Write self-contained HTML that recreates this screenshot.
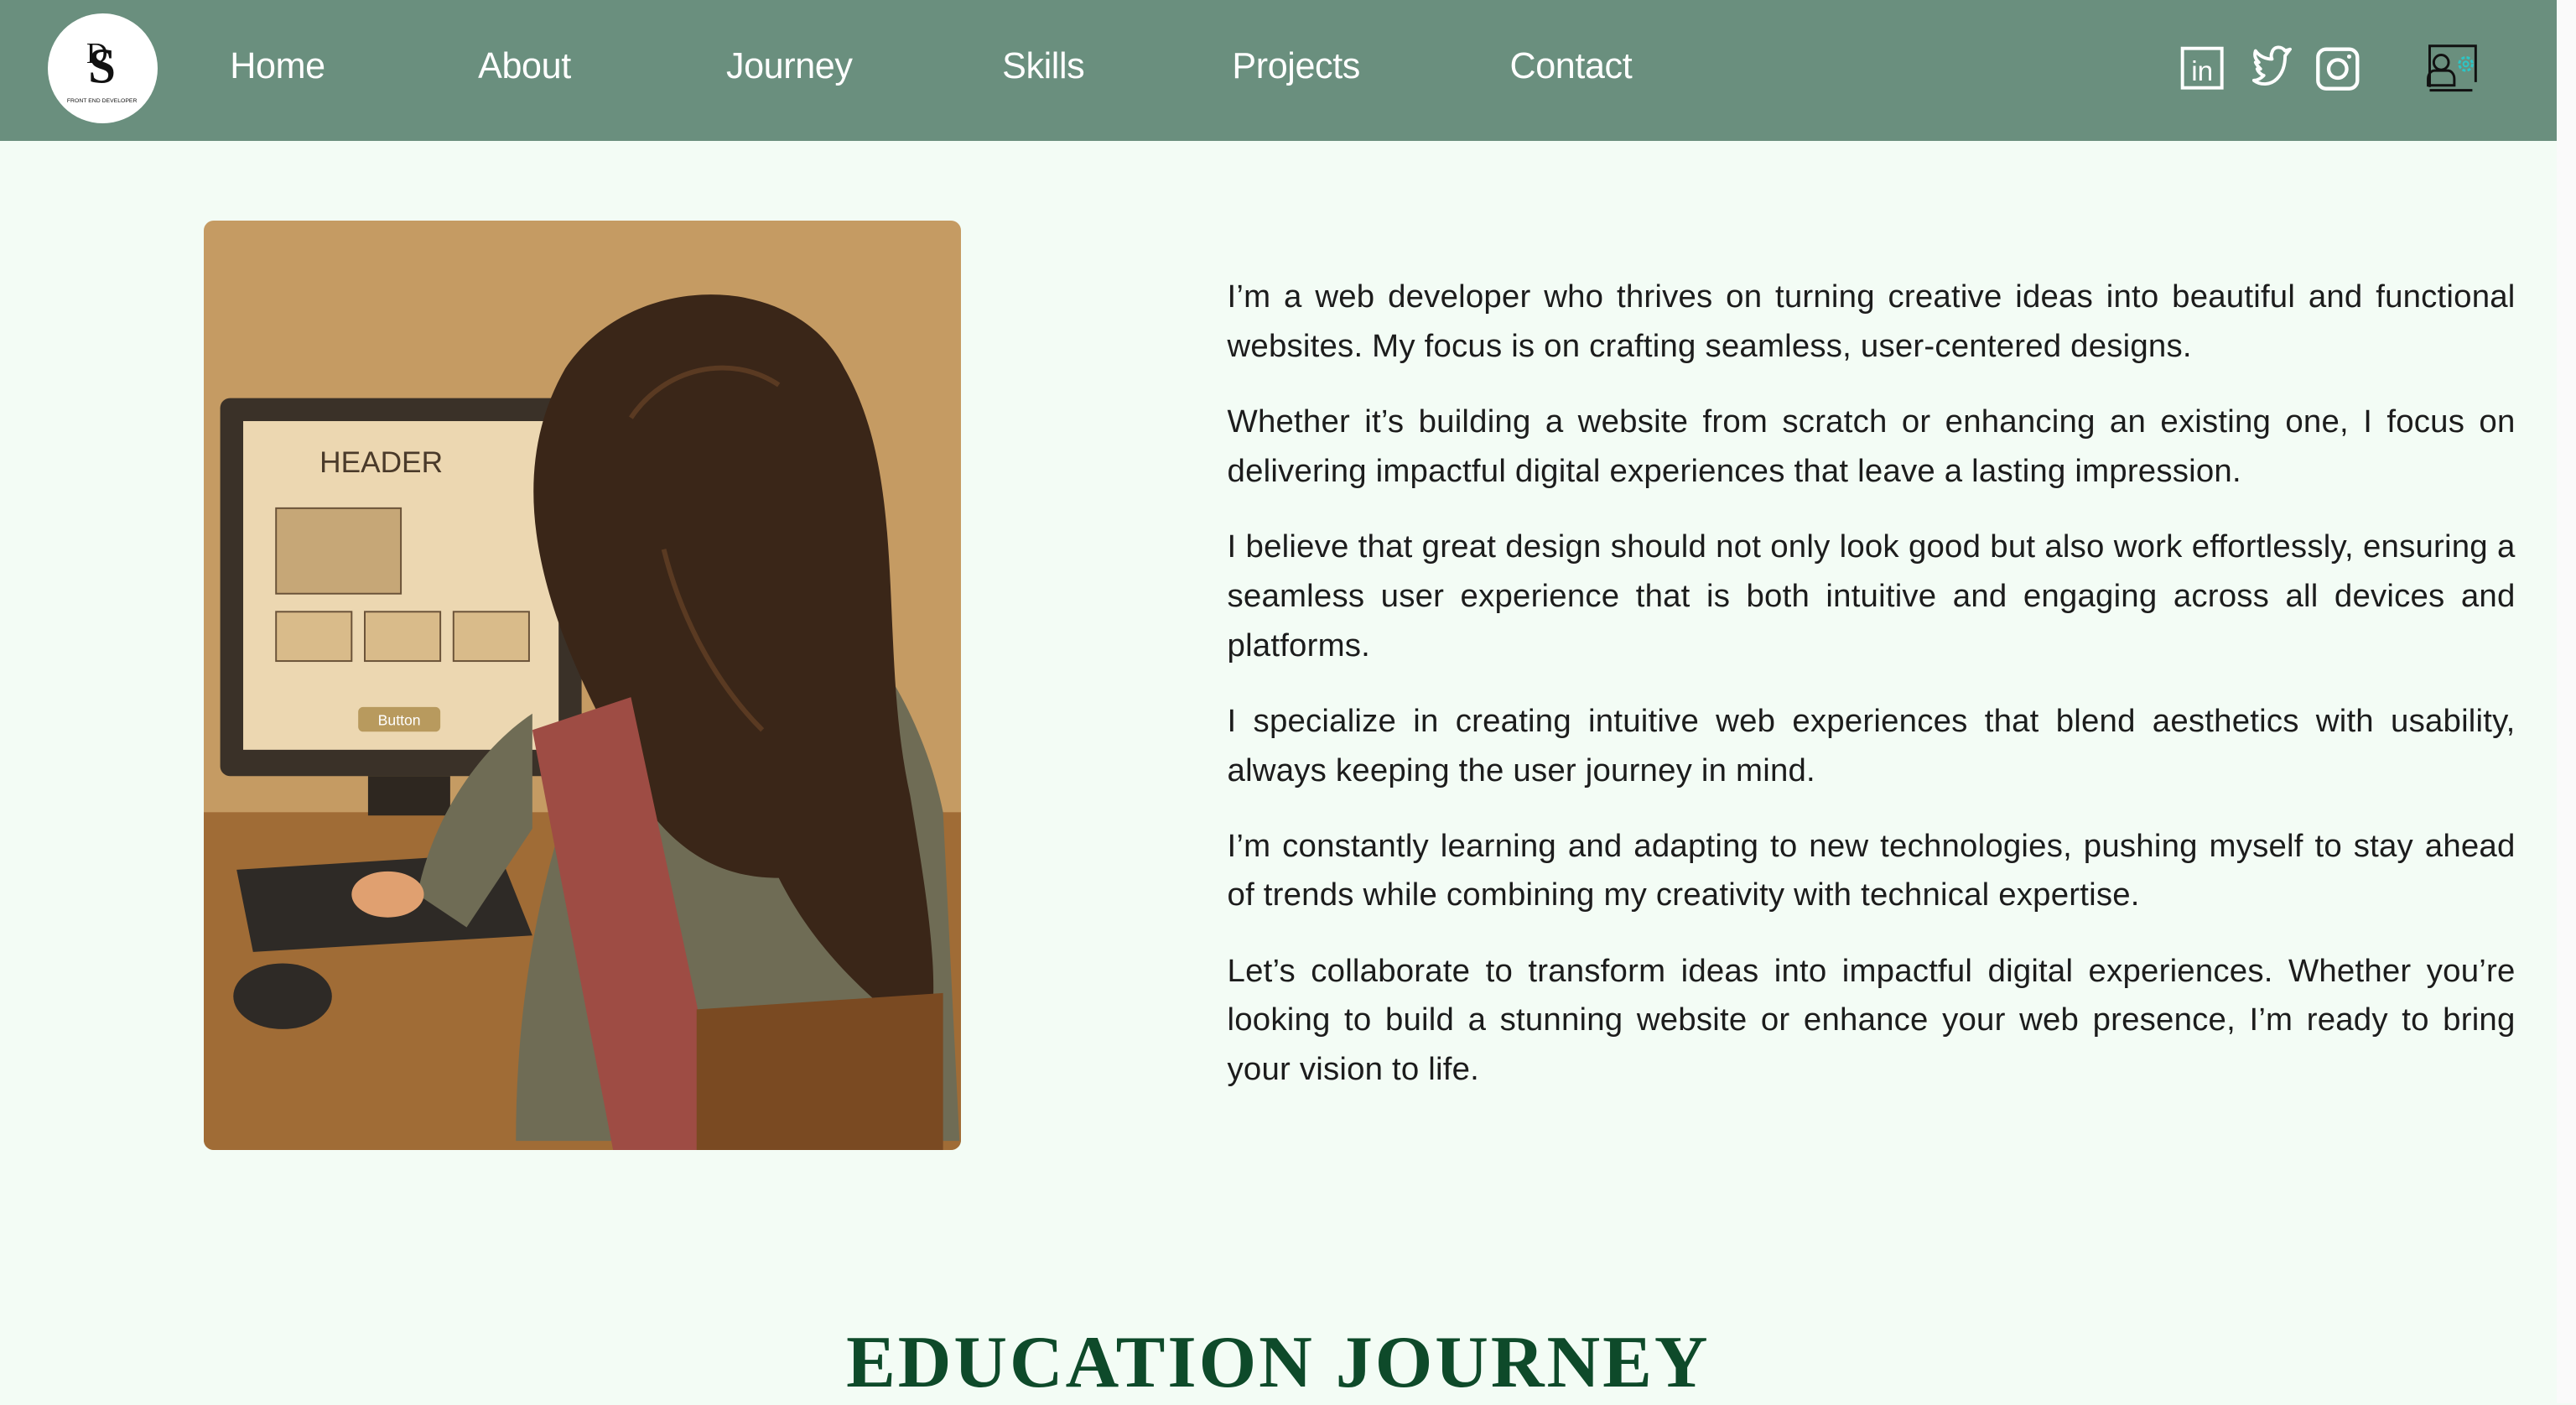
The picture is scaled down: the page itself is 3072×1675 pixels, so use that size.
<!DOCTYPE html>
<html><head><meta charset="utf-8"><style>
html,body{margin:0;padding:0;}
body{width:1568px;height:854px;zoom:1.9592;background:#f3fcf5;overflow:hidden;position:relative;font-family:"Liberation Sans",sans-serif;}
.hdr{position:absolute;left:0;top:0;width:1556px;height:86px;background:#6a8f7e;}
.logo{position:absolute;left:29px;top:8px;width:67px;height:67px;border-radius:50%;background:#fff;}
.nav a{position:absolute;top:28px;color:#fff;font-size:22px;text-decoration:none;letter-spacing:-0.2px;}
.sb{position:absolute;left:1556px;top:0;width:12px;height:854px;background:#fafafa;}
.thumb{position:absolute;left:1560px;top:115px;width:6px;height:125px;background:#b0b0b0;border-radius:3px;}
.img{position:absolute;left:124px;top:134px;width:461px;height:566px;border-radius:6px;overflow:hidden;}
.txt{position:absolute;left:747px;top:166px;width:784px;color:#1c1c1c;font-size:19.6px;line-height:30px;text-align:justify;letter-spacing:0.1px;}
.txt p{margin:0 0 16px 0;}
h2{position:absolute;left:0;width:1556px;top:803px;margin:0;text-align:center;font-family:"Liberation Serif",serif;font-weight:bold;font-size:45px;color:#0e4a2a;letter-spacing:1.5px;}
</style></head><body>
<div class="hdr">
<div class="logo"><svg width="67" height="67" viewBox="0 0 67 67"><text x="33" y="42" font-family="Liberation Serif" font-size="30" font-weight="bold" text-anchor="middle" fill="#111">S</text><text x="30" y="30" font-family="Liberation Serif" font-size="18" text-anchor="middle" fill="#111">D</text><text x="33" y="54" font-size="3.5" text-anchor="middle" fill="#111" font-family="Liberation Sans">FRONT END DEVELOPER</text></svg></div>
<div class="nav">
<a style="left:140px">Home</a><a style="left:291px">About</a><a style="left:442px">Journey</a><a style="left:610px">Skills</a><a style="left:750px">Projects</a><a style="left:919px">Contact</a>
</div>
<svg style="position:absolute;left:1320px;top:22px" width="200" height="40" viewBox="0 0 200 40">
<rect x="8.5" y="7.5" width="24" height="24" fill="none" stroke="#fff" stroke-width="2"/>
<text x="20.5" y="27" font-size="17" fill="#fff" text-anchor="middle" font-family="Liberation Sans">in</text>
<path d="M52 27c4 3 10 3 14-1c4-4 5-9 5-14l3-4l-3 1c-2-3-7-3-8 1c-1 2 0 4 0 4c-4 0-8-2-10-5c-1 3 0 5 2 7l-2 0c1 2 2 3 3 4l-2 0c1 3 4 4 4 4c-2 2-4 3-6 3z" fill="none" stroke="#fff" stroke-width="2" stroke-linejoin="round"/>
<rect x="91" y="8" width="24" height="24" rx="5" fill="none" stroke="#fff" stroke-width="2.2"/>
<circle cx="103" cy="20" r="5.5" fill="none" stroke="#fff" stroke-width="2.2"/>
<circle cx="110" cy="12.5" r="1.3" fill="#fff"/>
<path d="M159 31V6h28v22" fill="none" stroke="#111" stroke-width="1.5"/>
<path d="M159 33h26" stroke="#111" stroke-width="1.5"/>
<circle cx="166" cy="16" r="4.5" fill="none" stroke="#111" stroke-width="1.5"/>
<path d="M158 30v-4c0-3 2-5 4-5h8c2 0 4 2 4 5v4z" fill="none" stroke="#111" stroke-width="1.5"/>
<circle cx="181" cy="17" r="4" fill="none" stroke="#2cc6c6" stroke-width="1.5" stroke-dasharray="2 1.2"/>
<circle cx="181" cy="17" r="1.5" fill="none" stroke="#2cc6c6" stroke-width="1"/>
</svg>
</div>
<div class="sb"><div class="thumb"></div></div>
<div class="img"><svg width="461" height="566" viewBox="0 0 461 566">
<rect width="461" height="566" fill="#c59b63"/>
<rect x="0" y="360" width="461" height="206" fill="#a06c36"/>
<rect x="10" y="108" width="220" height="230" rx="6" fill="#3a3128"/>
<rect x="24" y="122" width="192" height="200" fill="#ecd7b1"/>
<text x="108" y="153" font-size="18" fill="#4a3a2a" text-anchor="middle" font-family="Liberation Sans">HEADER</text>
<rect x="44" y="175" width="76" height="52" fill="#c6a777" stroke="#6a5238"/>
<rect x="44" y="238" width="46" height="30" fill="#d9bb8a" stroke="#6a5238"/>
<rect x="98" y="238" width="46" height="30" fill="#d9bb8a" stroke="#6a5238"/>
<rect x="152" y="238" width="46" height="30" fill="#d9bb8a" stroke="#6a5238"/>
<rect x="94" y="296" width="50" height="15" rx="3" fill="#b89a5e"/>
<text x="119" y="307" font-size="9" fill="#fff" text-anchor="middle" font-family="Liberation Sans">Button</text>
<rect x="100" y="338" width="50" height="24" fill="#2e2720"/>
<path d="M20 395l160 -10 20 50-170 10z" fill="#2e2a26"/>
<ellipse cx="48" cy="472" rx="30" ry="20" fill="#2e2a26"/>
<path d="M190 560c0-140 40-250 80-300c20-30 60-40 100-30c40 20 70 80 80 130l10 200z" fill="#6f6c55"/>
<path d="M200 300c-30 20-60 60-70 110l30 20 40-60z" fill="#6f6c55"/>
<path d="M240 300c-30-60-60-140-20-210c40-60 140-60 170 0c40 70 20 170 40 260c10 60 20 120 10 150c-40-30-70-60-90-100c-40 0-80-20-110-100z" fill="#3a2618"/>
<path d="M260 120c20-30 60-40 90-20M280 200c10 40 30 80 60 110" stroke="#5a3a22" stroke-width="3" fill="none"/>
<path d="M200 310l60-20 60 280-70 0z" fill="#9e4c44"/>
<ellipse cx="112" cy="410" rx="22" ry="14" fill="#e0a070"/>
<path d="M300 480l150-10 0 96-150 0z" fill="#7a4a22"/>
</svg></div>
<div class="txt">
<p>I’m a web developer who thrives on turning creative ideas into beautiful and functional websites. My focus is on crafting seamless, user-centered designs.</p>
<p>Whether it’s building a website from scratch or enhancing an existing one, I focus on delivering impactful digital experiences that leave a lasting impression.</p>
<p>I believe that great design should not only look good but also work effortlessly, ensuring a seamless user experience that is both intuitive and engaging across all devices and platforms.</p>
<p>I specialize in creating intuitive web experiences that blend aesthetics with usability, always keeping the user journey in mind.</p>
<p>I’m constantly learning and adapting to new technologies, pushing myself to stay ahead of trends while combining my creativity with technical expertise.</p>
<p>Let’s collaborate to transform ideas into impactful digital experiences. Whether you’re looking to build a stunning website or enhance your web presence, I’m ready to bring your vision to life.</p>
</div>
<h2>EDUCATION JOURNEY</h2>
</body></html>
